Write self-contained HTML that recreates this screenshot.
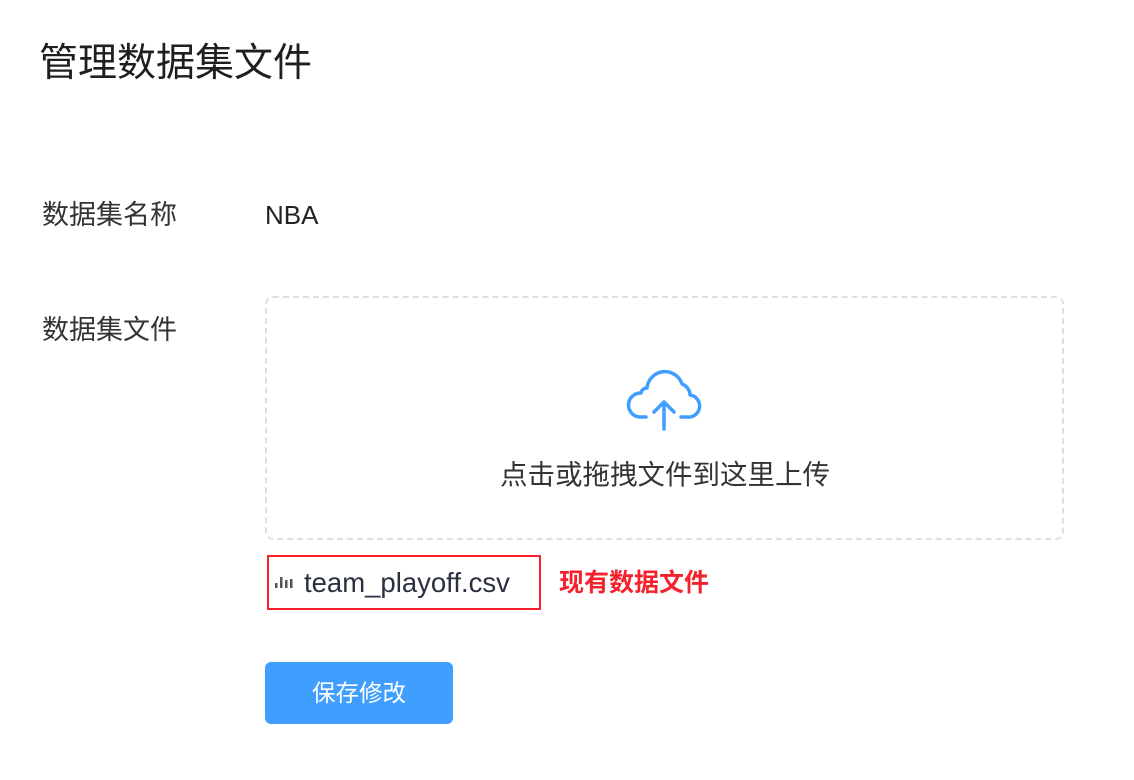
<!DOCTYPE html>
<html><head><meta charset="utf-8"><style>
body{margin:0;width:1134px;height:780px;background:#fff;font-family:"Liberation Sans","Noto Sans CJK SC",sans-serif;position:relative;overflow:hidden}
.a{position:absolute;white-space:nowrap}
</style></head><body>
<div class="a" style="left:39px;top:42px;font-size:39px;color:#1f1f1f;line-height:44px">管理数据集文件</div>
<div class="a" style="left:42px;top:199px;font-size:27px;color:#333;line-height:32px">数据集名称</div>
<div class="a" style="left:265px;top:199px;font-size:26px;color:#222;line-height:32px">NBA</div>
<div class="a" style="left:42px;top:314px;font-size:27px;color:#333;line-height:32px">数据集文件</div>
<div class="a" style="left:265px;top:296px;width:795px;height:240px;border:2px dashed #dcdfe6;border-radius:8px"></div>
<svg class="a" style="left:620px;top:360px" width="90" height="75" viewBox="620 360 90 75">
<path d="M646 417 H640 A12 12 0 0 1 641 393 A6 6 0 0 1 647 388 A18 18 0 0 1 682 384 A12 12 0 0 1 690 395 A11 11 0 0 1 687 417 H681" fill="none" stroke="#409eff" stroke-width="3.5" stroke-linecap="round" stroke-linejoin="round"/>
<path d="M664 429 V402 M654 412 L664 402 L674 412" fill="none" stroke="#409eff" stroke-width="3.5" stroke-linecap="round" stroke-linejoin="round"/>
</svg>
<div class="a" style="left:500px;top:459px;font-size:27.5px;color:#333;line-height:32px">点击或拖拽文件到这里上传</div>
<div class="a" style="left:267px;top:555px;width:270px;height:51px;border:2.5px solid #f5222d"></div>
<svg class="a" style="left:275px;top:573px" width="20" height="16"><rect x="0" y="10" width="2.5" height="5" fill="#555"/><rect x="5" y="4" width="2.5" height="11" fill="#555"/><rect x="10" y="7" width="2.5" height="8" fill="#555"/><rect x="15" y="6" width="2.5" height="9" fill="#555"/></svg>
<div class="a" style="left:304px;top:567px;font-size:27.5px;color:#2b3040;line-height:32px">team_playoff.csv</div>
<div class="a" style="left:559px;top:568px;font-size:25px;color:#f5222d;font-weight:bold;line-height:30px">现有数据文件</div>
<div class="a" style="left:265px;top:662px;width:188px;height:62px;background:#409eff;border-radius:6px;color:#fff;font-size:23.5px;line-height:62px;text-align:center">保存修改</div>
</body></html>
